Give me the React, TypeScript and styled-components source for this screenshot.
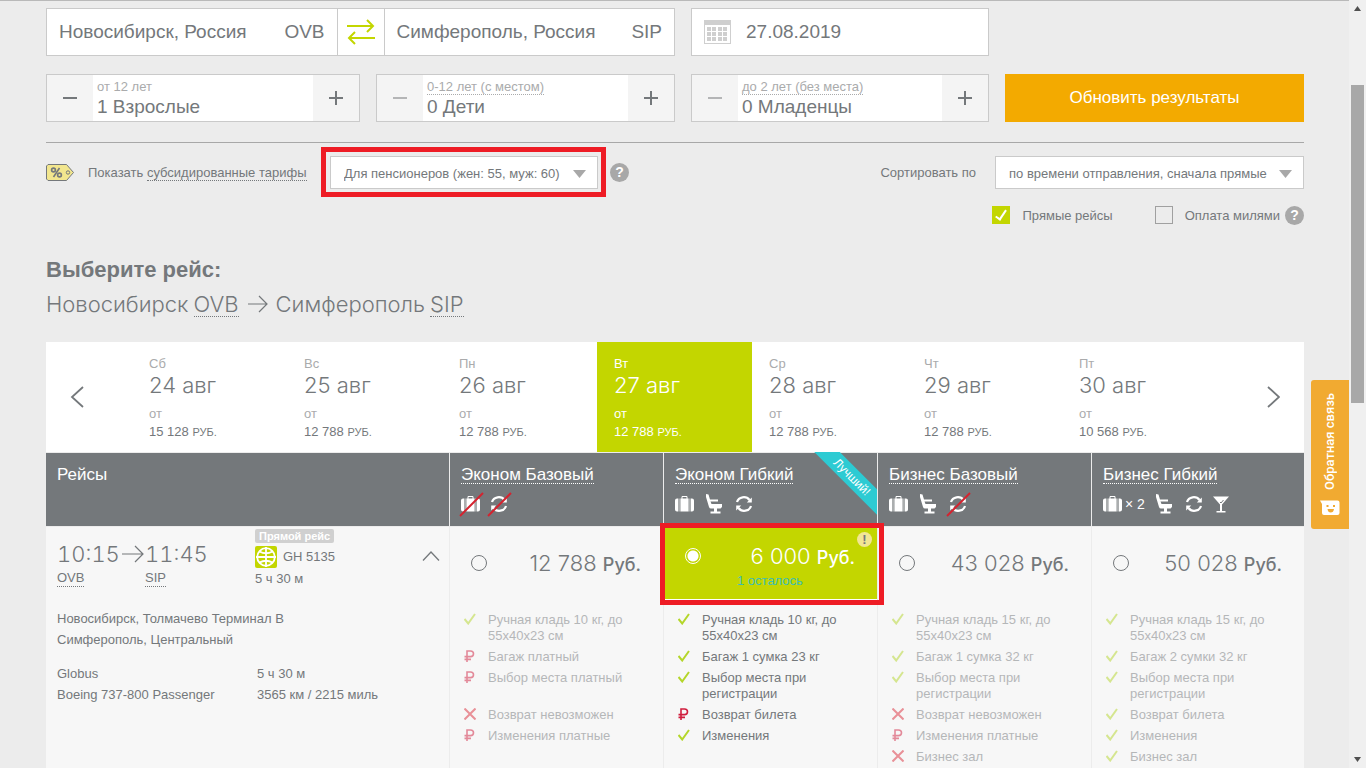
import React from "react";
import styled, { createGlobalStyle, css } from "styled-components";

const c = {
  page: "#ececec",
  text: "#74787b",
  muted: "#aaabac",
  line: "#cacaca",
  lime: "#c3d600",
  orange: "#f3aa00",
  red: "#ee1c25",
  cyan: "#2dcbd3",
};
const light = `"Inter", "Roboto", "Liberation Sans", sans-serif`;

const GlobalStyle = createGlobalStyle`
  *, *::before, *::after { box-sizing: border-box; }
  body { margin: 0; background: ${c.page}; }
  body, button, input, select {
    font-family: "Liberation Sans", Arial, sans-serif;
    font-size: 13px;
    color: ${c.text};
  }
  button { border: 0; padding: 0; background: none; cursor: pointer; }
  svg { display: block; flex: none; }
  h1, h2, p, ul { margin: 0; padding: 0; font-weight: 400; }
`;

const Shell = styled.div`
  display: flex;
  height: 100vh;
  overflow: hidden;
`;
const Main = styled.main`
  flex: 1;
  min-width: 0;
  padding: 7px 45px 0 46px;
  border-top: 1px solid #b9b9b9;
`;
const ScrollTrack = styled.div`
  display: flex;
  flex-direction: column;
  align-items: center;
  justify-content: space-between;
  width: 17px;
  padding: 6px 0;
  background: #f0f0f0;
`;
const ScrollThumb = styled.div`
  width: 13px;
  height: 318px;
  margin: 74px 0 auto;
  background: #a8a8a8;
`;

/* ---- search form ---- */
const SearchGrid = styled.form`
  display: grid;
  grid-template-columns: minmax(0, 314fr) minmax(0, 299fr) minmax(0, 298fr) minmax(0, 299fr);
  gap: 18px 16px;
  padding-bottom: 20px;
  border-bottom: 1px solid #a8a8a8;
`;
const Box = styled.div`
  display: flex;
  height: 48px;
  border: 1px solid ${c.line};
  background: #fff;
`;
const RouteBox = styled(Box)`
  grid-column: span 2;
`;
const Field = styled.label`
  display: flex;
  flex: 1;
  align-items: center;
  min-width: 0;
  padding: 0 12px;
  font-size: 19px;
`;
const TextInput = styled.input`
  flex: 1;
  min-width: 0;
  padding: 0;
  border: 0;
  outline: 0;
  background: none;
  font-size: 19px;
`;
const SwapButton = styled.button`
  display: flex;
  align-items: center;
  justify-content: center;
  width: 48px;
  border: solid ${c.line};
  border-width: 0 1px;
`;
const DateIcon = styled.span`
  margin-right: 15px;
`;
const StepButton = styled.button`
  display: flex;
  align-items: center;
  justify-content: center;
  width: 46px;
  background: #f4f4f4;
  color: ${c.text};
  &:disabled {
    color: #b4b5b6;
  }
`;
const StepBody = styled.div`
  flex: 1;
  min-width: 0;
  padding: 4px 4px 0;
`;
const StepHint = styled.span<{ $dotted?: boolean }>`
  display: table;
  line-height: 15px;
  color: ${c.muted};
  border-bottom: 1px ${(p) => (p.$dotted ? "dotted" : "solid")}
    ${(p) => (p.$dotted ? c.muted : "transparent")};
`;
const StepValue = styled.p`
  font-size: 19px;
  line-height: 23px;
`;
const SubmitButton = styled.button`
  grid-column: 4;
  height: 48px;
  background: ${c.orange};
  color: #fff;
  font-size: 17px;
`;

/* ---- filters ---- */
const FilterRow = styled.div`
  display: flex;
  align-items: center;
  margin-top: 13px;
`;
const FilterText = styled.span`
  margin-left: 14px;
`;
const Dotted = styled.a`
  display: inline-block;
  color: inherit;
  text-decoration: none;
  border-bottom: 1px dotted currentColor;
`;
const SelectWrap = styled.span<{ $marked?: boolean; $width: number }>`
  position: relative;
  display: block;
  width: ${(p) => p.$width}px;
  margin: ${(p) => (p.$marked ? "0 12px 0 auto" : "0 0 0 19px")};
  svg {
    position: absolute;
    right: 12px;
    top: 14px;
    pointer-events: none;
  }
  ${(p) =>
    p.$marked &&
    css`
      &::after {
        content: "";
        position: absolute;
        inset: -9px -8px -8px -9px;
        border: 5px solid ${c.red};
        pointer-events: none;
      }
    `}
`;
const Select = styled.select`
  display: block;
  width: 100%;
  height: 33px;
  padding: 2px 0 0 13px;
  border: 1px solid ${c.line};
  border-radius: 0;
  background: #fff;
  appearance: none;
`;
const Subsidy = styled.div`
  display: flex;
  align-items: center;
  width: 564px;
`;
const SortLabel = styled.label`
  margin-left: auto;
`;
const HelpButton = styled.button`
  width: 19px;
  height: 19px;
  border-radius: 50%;
  background: #a8a8a8;
  color: #fff;
  font-size: 14px;
  font-weight: 700;
  line-height: 19px;
`;
const CheckRow = styled.div`
  display: flex;
  justify-content: flex-end;
  align-items: center;
  height: 18px;
  margin-top: 17px;
`;
const CheckLabel = styled.label`
  display: flex;
  align-items: center;
  gap: 12px;
  margin-right: 42px;
  &:last-of-type {
    margin-right: 5px;
  }
`;
const Checkbox = styled.input`
  appearance: none;
  width: 18px;
  height: 18px;
  margin: 0;
  border: 1px solid #a0a0a0;
  &:checked {
    border: 0;
    background: ${c.lime};
  }
  &:checked::after {
    content: "";
    display: block;
    width: 6px;
    height: 12px;
    margin: 2px 0 0 6px;
    border: solid #fff;
    border-width: 0 2px 2px 0;
    transform: rotate(34deg);
  }
`;

/* ---- headings ---- */
const Title = styled.h1`
  margin-top: 32px;
  font-size: 22px;
  font-weight: 700;
  line-height: 28px;
`;
const RouteTitle = styled.h2`
  display: flex;
  align-items: center;
  height: 32px;
  margin: 4px 0 22px;
  font: 300 22px/24px ${light};
  svg {
    margin: 0 8px 0 9px;
  }
  a {
    margin-left: 5px;
  }
`;

/* ---- date carousel ---- */
const Carousel = styled.nav`
  display: grid;
  grid-template-columns: minmax(0, 86fr) repeat(7, minmax(0, 155fr)) minmax(0, 87fr);
  height: 110px;
  background: #fff;
`;
const CarouselArrow = styled.button`
  display: flex;
  align-items: center;
  padding: 0 24px;
  &:last-child {
    justify-content: flex-end;
  }
`;
const Day = styled.button<{ $active?: boolean }>`
  display: flex;
  flex-direction: column;
  align-items: flex-start;
  padding: 13px 0 0 17px;
  text-align: left;
  line-height: 18px;
  color: ${(p) => (p.$active ? "#fff" : c.text)};
  background: ${(p) => (p.$active ? c.lime : "none")};
`;
const DayMuted = styled.span<{ $active?: boolean }>`
  color: ${(p) => (p.$active ? "#fff" : c.muted)};
`;
const DayDate = styled.span`
  margin-bottom: 8px;
  font: 300 22px/24px ${light};
`;
const Small = styled.span`
  font-size: 11px;
`;

/* ---- fares table ---- */
const Table = styled.table`
  width: 100%;
  margin-top: 1px;
  border-spacing: 0;
  table-layout: fixed;
`;
const HeadCell = styled.th`
  position: relative;
  height: 73px;
  padding: 13px 11px 0;
  background: ${c.text};
  color: #fff;
  font-size: 17px;
  font-weight: 400;
  line-height: 17px;
  text-align: left;
  vertical-align: top;
  & + & {
    border-left: 1px solid ${c.page};
  }
`;
const IconRow = styled.div`
  display: flex;
  align-items: center;
  height: 22px;
  margin-top: 9px;
  font-size: 14px;
  gap: 8px;
`;
const BagCount = styled.span`
  display: flex;
  align-items: center;
  gap: 2px;
`;
const RibbonClip = styled.div`
  position: absolute;
  top: -1px;
  right: 0;
  width: 64px;
  height: 64px;
  overflow: hidden;
`;
const Ribbon = styled.span`
  position: absolute;
  top: 16px;
  left: -11px;
  width: 100px;
  background: ${c.cyan};
  font-size: 12px;
  line-height: 18px;
  text-align: center;
  transform: rotate(45deg);
`;
const BodyCell = styled.td`
  height: 320px;
  padding: 0;
  border-top: 1px solid ${c.page};
  background: #f7f7f7;
  vertical-align: top;
  & + & {
    border-left: 1px solid ${c.page};
  }
`;
const Flight = styled.div`
  display: grid;
  grid-template-columns: 88px 110px 1fr 27px;
  padding: 2px 0 0 11px;
  height: 81px;
`;
const FlightTime = styled.div`
  display: flex;
  flex-direction: column;
  align-items: flex-start;
  padding-top: 13px;
  line-height: 16px;
`;
const Clock = styled.span`
  display: flex;
  align-items: center;
  gap: 2px;
  margin-bottom: 4px;
  font: 300 22px/24px ${light};
  font-variant-numeric: tabular-nums;
`;
const FlightInfo = styled.div`
  display: flex;
  flex-direction: column;
  align-items: flex-start;
  line-height: 22px;
`;
const DirectBadge = styled.span`
  padding: 0 4px;
  border-radius: 2px;
  background: #d0d0d0;
  color: #fff;
  font-size: 11px;
  font-weight: 700;
  line-height: 14px;
`;
const FlightNumber = styled.span`
  display: flex;
  align-items: center;
  gap: 6px;
  margin-top: 3px;
`;
const CollapseButton = styled.button`
  align-self: start;
  padding-top: 22px;
`;
const Details = styled.div`
  display: grid;
  grid-template-columns: 200px 1fr;
  padding-left: 11px;
  line-height: 21px;
`;
const Airports = styled.div`
  grid-column: span 2;
  margin-bottom: 13px;
`;
const Fare = styled.label<{ $active?: boolean }>`
  position: relative;
  display: flex;
  flex-wrap: wrap;
  align-items: center;
  align-content: center;
  justify-content: space-between;
  height: 73px;
  padding: ${(p) => (p.$active ? 4 : 0)}px 22px 0 21px;
  border-bottom: 1px solid ${(p) => (p.$active ? "#fff" : "transparent")};
  background: ${(p) => (p.$active ? c.lime : "none")};
  color: ${(p) => (p.$active ? "#fff" : c.text)};
  ${(p) =>
    p.$active &&
    css`
      &::after {
        content: "";
        position: absolute;
        inset: -4px -7px -6px -4px;
        border: 5px solid ${c.red};
        pointer-events: none;
      }
    `}
`;
const Radio = styled.input`
  appearance: none;
  width: 16px;
  height: 16px;
  margin: 0;
  border: 1px solid currentColor;
  border-radius: 50%;
  color: inherit;
  &:checked {
    background: radial-gradient(circle, #fff 5px, transparent 6px);
  }
`;
const Price = styled.span`
  padding-top: 2px;
  font: 300 22px/28px ${light};
`;
const Currency = styled.span`
  font-size: 18px;
  font-weight: 500;
`;
const SeatsLeft = styled.span`
  flex-basis: 100%;
  padding-left: 52px;
  line-height: 18px;
  color: #3dbdb4;
`;
const Notice = styled.span`
  position: absolute;
  top: 5px;
  right: 5px;
  width: 15px;
  height: 15px;
  border-radius: 50%;
  background: #f2e694;
  color: ${c.text};
  font-size: 13px;
  font-weight: 700;
  line-height: 15px;
  text-align: center;
`;
const Features = styled.ul<{ $faded?: boolean }>`
  display: flex;
  flex-direction: column;
  gap: 5px;
  padding: 12px 20px 0 14px;
  list-style: none;
  opacity: ${(p) => (p.$faded ? 0.5 : 1)};
`;
const Feature = styled.li<{ $tall?: boolean }>`
  display: flex;
  gap: 12px;
  min-height: ${(p) => (p.$tall ? 32 : 16)}px;
  line-height: 16px;
  svg {
    margin-top: 1px;
  }
`;

const FeedbackTab = styled.button`
  position: fixed;
  top: 380px;
  right: 17px;
  display: flex;
  flex-direction: column;
  align-items: center;
  justify-content: space-between;
  width: 38px;
  height: 149px;
  padding: 13px 0;
  border-radius: 3px 0 0 3px;
  background: #f1aa31;
  color: #fff;
`;
const FeedbackText = styled.span`
  font: 500 13px/16px "Roboto", sans-serif;
  writing-mode: vertical-rl;
  transform: rotate(180deg);
`;

/* ---- drawings ---- */
const stroke = { fill: "none", stroke: "currentColor" } as const;

const LongArrow = ({ size = 20 }: { size?: number }) => (
  <svg width={size} height="18" viewBox={`0 0 ${size} 18`} {...stroke} strokeWidth="1.2">
    <path d={`M0 9H${size - 1}M${size - 9} 1L${size - 1} 9L${size - 9} 17`} />
  </svg>
);
const Chevron = ({ dir }: { dir: "left" | "right" }) => (
  <svg width="14" height="22" viewBox="0 0 14 22" {...stroke} strokeWidth="1.8">
    <path d={dir === "left" ? "M13 1L2 11L13 21" : "M2 1L13 11L2 21"} />
  </svg>
);
const Caret = () => (
  <svg width="13" height="8" viewBox="0 0 13 8" fill="#a8a8a8">
    <path d="M0 0H13L6.500 8Z" />
  </svg>
);
const SwapIcon = () => (
  <svg width="28" height="26" viewBox="0 0 28 26" fill="none" stroke={c.lime} strokeWidth="2">
    <path d="M0 7H26M20 1L26 7L20 13M28 19H2M8 13L2 19L8 25" />
  </svg>
);
const CalendarIcon = () => (
  <svg width="27" height="24" viewBox="0 0 27 24">
    <rect x="0.500" y="0.500" width="26" height="23" fill="#fff" stroke="#cfcfcf" />
    <rect width="27" height="5" fill="#cfcfcf" />
    {[7, 12, 17].map((y) =>
      [3, 8, 14, 19].map((x) => (
        <rect key={`${x}-${y}`} x={x} y={y} width="4" height="4" fill="#cfcfcf" />
      ))
    )}
  </svg>
);
const Sign = ({ plus }: { plus?: boolean }) => (
  <svg width="14" height="14" viewBox="0 0 14 14" {...stroke} strokeWidth="2">
    <path d={plus ? "M0 7H14M7 0V14" : "M0 7H14"} />
  </svg>
);
const TagIcon = () => (
  <svg width="28" height="17" viewBox="0 0 28 17" fill="none" stroke={c.text}>
    <path d="M2 0.500H20.500L27.500 8.500L20.500 16.500H2L0.500 15V2Z" fill="#f2e68e" />
    <g strokeWidth="1.600">
      <circle cx="7.500" cy="6" r="1.900" />
      <circle cx="13.500" cy="11" r="1.900" />
      <path d="M13.500 4L7.500 13" />
    </g>
    <circle cx="22" cy="8.500" r="1.700" />
  </svg>
);
const Strike = () => <path d="M-1 22L22 -1" stroke="#d4232f" strokeWidth="2" />;

const BagIcon = ({ off }: { off?: boolean }) => (
  <svg width="20" height="20" viewBox="0 0 20 20" fill="#fff" overflow="visible">
    <path d="M7 5V2.500H12V5" fill="none" stroke="#fff" strokeWidth="1" />
    <path d="M2 4.500H3V17.500H2Q0 17.500 0 15.500V6.500Q0 4.500 2 4.500ZM5.500 4.500H13.500V17.500H5.500ZM16 4.500H17Q19 4.500 19 6.500V15.500Q19 17.500 17 17.500H16Z" />
    <path d="M3 4.500H5.500V17.500H3ZM13.500 4.500H16V17.500H13.500Z" opacity="0.400" />
    {off && <Strike />}
  </svg>
);
const SeatIcon = () => (
  <svg width="23" height="22" viewBox="0 0 23 22" fill="#fff">
    <path d="M3 1L5.500 1.500L7 6.500H15V8.500H7.500L8.500 11H19V14L17.500 15.500H8Q6.500 15.500 6 14L3 4Z" />
    <path d="M11 15H14V18.500H17.500V20.500H7.500V18.500H11Z" />
  </svg>
);
const RefundIcon = ({ off }: { off?: boolean }) => (
  <svg width="20" height="20" viewBox="0 0 20 20" fill="none" stroke="#fff" strokeWidth="2.200" overflow="visible">
    <path d="M3 8A7 6.500 0 0 1 15.500 6M17 12A7 6.500 0 0 1 4.500 14" />
    <path d="M17.800 3.500V8.500H12.800ZM2.200 16.500V11.500H7.200Z" fill="#fff" stroke="none" />
    {off && <Strike />}
  </svg>
);
const GlassIcon = () => (
  <svg width="18" height="20" viewBox="0 0 18 20">
    <path d="M1 2.500H17L10 10.500V17H13.500V18.500H4.500V17H8V10.500Z" fill="#fff" />
    <path d="M8 8L9 9L11.500 6" fill="none" stroke={c.text} />
  </svg>
);
const GlobeIcon = () => (
  <svg width="22" height="22" viewBox="0 0 22 22" fill="none" stroke="#fff" strokeWidth="1.800">
    <rect width="22" height="22" rx="2" fill={c.lime} stroke="none" />
    <circle cx="11" cy="11" r="8.800" />
    <path d="M1 11H21M11 1V21M4.500 5.500Q11 9 17.500 5.500M4.500 16.500Q11 13 17.500 16.500" />
  </svg>
);
const ChatIcon = () => (
  <svg width="20" height="16" viewBox="0 0 20 16">
    <path d="M0 0.500H17.500Q19.500 0.500 19.500 2.500V13Q19.500 15 17.500 15H4Q2 15 2 13V4Z" fill="#fff" />
    <path d="M6.500 6H8.500M13 6H15" stroke="#f1aa31" strokeWidth="1.800" />
    <path d="M7.500 9H14Q13.500 12.500 10.700 12.500Q8 12.500 7.500 9Z" fill="#f1aa31" />
  </svg>
);

type Mark = "yes" | "no" | "pay";
const MarkIcon = ({ mark }: { mark: Mark }) => (
  <svg width="12" height="12" viewBox="0 0 12 12" fill="none" strokeWidth="2">
    {mark === "yes" && <path d="M0.500 6L4.200 10.500L11 1" stroke="#b4d62a" />}
    {mark === "no" && <path d="M0.500 0.500L11.500 11.500M11.500 0.500L0.500 11.500" stroke="#dc2b3a" />}
    {mark === "pay" && (
      <path d="M3 12V1H6.500Q9.500 1 9.500 3.800Q9.500 6.600 6.500 6.600H0.500M0.500 9.400H7" stroke="#d01e3e" strokeWidth="1.600" />
    )}
  </svg>
);

/* ---- data ---- */
const passengers = [
  { hint: "от 12 лет", value: "1 Взрослые", dotted: false, empty: false },
  { hint: "0-12 лет (с местом)", value: "0 Дети", dotted: true, empty: true },
  { hint: "до 2 лет (без места)", value: "0 Младенцы", dotted: true, empty: true },
];
const days = [
  ["Сб", "24 авг", "15 128"],
  ["Вс", "25 авг", "12 788"],
  ["Пн", "26 авг", "12 788"],
  ["Вт", "27 авг", "12 788"],
  ["Ср", "28 авг", "12 788"],
  ["Чт", "29 авг", "12 788"],
  ["Пт", "30 авг", "10 568"],
];
const ACTIVE_DAY = 3;

interface FareData {
  name: string;
  price: string;
  width: number;
  best?: boolean;
  left?: string;
  icons: React.ReactNode;
  features: [Mark, string][];
}
const fares: FareData[] = [
  {
    name: "Эконом Базовый",
    price: "12 788",
    width: 214,
    icons: (<><BagIcon off /><RefundIcon off /></>),
    features: [
      ["yes", "Ручная кладь 10 кг, до 55x40x23 см"],
      ["pay", "Багаж платный"],
      ["pay", "Выбор места платный"],
      ["no", "Возврат невозможен"],
      ["pay", "Изменения платные"],
    ],
  },
  {
    name: "Эконом Гибкий",
    price: "6 000",
    width: 214,
    best: true,
    left: "1 осталось",
    icons: (<><BagIcon /><SeatIcon /><RefundIcon /></>),
    features: [
      ["yes", "Ручная кладь 10 кг, до 55x40x23 см"],
      ["yes", "Багаж 1 сумка 23 кг"],
      ["yes", "Выбор места при регистрации"],
      ["pay", "Возврат билета"],
      ["yes", "Изменения"],
    ],
  },
  {
    name: "Бизнес Базовый",
    price: "43 028",
    width: 214,
    icons: (<><BagIcon /><SeatIcon /><RefundIcon off /></>),
    features: [
      ["yes", "Ручная кладь 15 кг, до 55x40x23 см"],
      ["yes", "Багаж 1 сумка 32 кг"],
      ["yes", "Выбор места при регистрации"],
      ["no", "Возврат невозможен"],
      ["pay", "Изменения платные"],
      ["no", "Бизнес зал"],
    ],
  },
  {
    name: "Бизнес Гибкий",
    price: "50 028",
    width: 213,
    icons: (<><BagCount><BagIcon />× 2</BagCount><SeatIcon /><RefundIcon /><GlassIcon /></>),
    features: [
      ["yes", "Ручная кладь 15 кг, до 55x40x23 см"],
      ["yes", "Багаж 2 сумки 32 кг"],
      ["yes", "Выбор места при регистрации"],
      ["yes", "Возврат билета"],
      ["yes", "Изменения"],
      ["yes", "Бизнес зал"],
    ],
  },
];

export default function App() {
  return (
    <Shell>
      <GlobalStyle />
      <Main>
        <SearchGrid onSubmit={(e) => e.preventDefault()}>
          <RouteBox>
            <Field>
              <TextInput aria-label="Откуда" defaultValue="Новосибирск, Россия" />
              OVB
            </Field>
            <SwapButton type="button" aria-label="Поменять местами">
              <SwapIcon />
            </SwapButton>
            <Field>
              <TextInput aria-label="Куда" defaultValue="Симферополь, Россия" />
              SIP
            </Field>
          </RouteBox>
          <Box>
            <Field>
              <DateIcon><CalendarIcon /></DateIcon>
              <TextInput aria-label="Дата" defaultValue="27.08.2019" />
            </Field>
          </Box>
          <span />
          {passengers.map((p) => (
            <Box key={p.value}>
              <StepButton type="button" aria-label="Меньше" disabled={p.empty}><Sign /></StepButton>
              <StepBody>
                <StepHint $dotted={p.dotted}>{p.hint}</StepHint>
                <StepValue>{p.value}</StepValue>
              </StepBody>
              <StepButton type="button" aria-label="Больше"><Sign plus /></StepButton>
            </Box>
          ))}
          <SubmitButton>Обновить результаты</SubmitButton>
        </SearchGrid>

        <FilterRow>
          <Subsidy>
            <TagIcon />
            <FilterText>
              Показать <Dotted href="#subsidy">субсидированные тарифы</Dotted>
            </FilterText>
            <SelectWrap $marked $width={268}>
              <Select aria-label="Субсидированный тариф">
                <option>Для пенсионеров (жен: 55, муж: 60)</option>
              </Select>
              <Caret />
            </SelectWrap>
          </Subsidy>
          <HelpButton aria-label="Справка о тарифах">?</HelpButton>
          <SortLabel htmlFor="sort">Сортировать по</SortLabel>
          <SelectWrap $width={309}>
            <Select id="sort">
              <option>по времени отправления, сначала прямые</option>
            </Select>
            <Caret />
          </SelectWrap>
        </FilterRow>
        <CheckRow>
          <CheckLabel><Checkbox type="checkbox" defaultChecked />Прямые рейсы</CheckLabel>
          <CheckLabel><Checkbox type="checkbox" />Оплата милями</CheckLabel>
          <HelpButton aria-label="Справка о милях">?</HelpButton>
        </CheckRow>

        <Title>Выберите рейс:</Title>
        <RouteTitle>
          Новосибирск <Dotted href="#ovb">OVB</Dotted>
          <LongArrow />
          Симферополь <Dotted href="#sip">SIP</Dotted>
        </RouteTitle>

        <Carousel>
          <CarouselArrow aria-label="Раньше"><Chevron dir="left" /></CarouselArrow>
          {days.map(([week, date, price], i) => {
            const active = i === ACTIVE_DAY;
            return (
              <Day key={date} $active={active}>
                <DayMuted $active={active}>{week}</DayMuted>
                <DayDate>{date}</DayDate>
                <DayMuted $active={active}>от</DayMuted>
                <span>{price} <Small>РУБ.</Small></span>
              </Day>
            );
          })}
          <CarouselArrow aria-label="Позже"><Chevron dir="right" /></CarouselArrow>
        </Carousel>

        <Table>
          <colgroup>
            <col />
            {fares.map((f) => <col key={f.name} width={f.width} />)}
          </colgroup>
          <thead>
            <tr>
              <HeadCell scope="col">Рейсы</HeadCell>
              {fares.map((f) => (
                <HeadCell key={f.name} scope="col">
                  <Dotted href="#fare">{f.name}</Dotted>
                  <IconRow>{f.icons}</IconRow>
                  {f.best && <RibbonClip><Ribbon>Лучший!</Ribbon></RibbonClip>}
                </HeadCell>
              ))}
            </tr>
          </thead>
          <tbody>
            <tr>
              <BodyCell>
                <Flight>
                  <FlightTime>
                    <Clock>10:15<LongArrow size={22} /></Clock>
                    <Dotted href="#ovb">OVB</Dotted>
                  </FlightTime>
                  <FlightTime>
                    <Clock>11:45</Clock>
                    <Dotted href="#sip">SIP</Dotted>
                  </FlightTime>
                  <FlightInfo>
                    <DirectBadge>Прямой рейс</DirectBadge>
                    <FlightNumber><GlobeIcon />GH 5135</FlightNumber>
                    <span>5 ч 30 м</span>
                  </FlightInfo>
                  <CollapseButton aria-label="Свернуть">
                    <svg width="18" height="10" viewBox="0 0 18 10" {...stroke} strokeWidth="1.300">
                      <path d="M1 9.500L9 1L17 9.500" />
                    </svg>
                  </CollapseButton>
                </Flight>
                <Details>
                  <Airports>
                    <p>Новосибирск, Толмачево Терминал B</p>
                    <p>Симферополь, Центральный</p>
                  </Airports>
                  <span>Globus</span>
                  <span>5 ч 30 м</span>
                  <span>Boeing 737-800 Passenger</span>
                  <span>3565 км / 2215 миль</span>
                </Details>
              </BodyCell>
              {fares.map((f) => (
                <BodyCell key={f.name}>
                  <Fare $active={f.best}>
                    <Radio type="radio" name="fare" defaultChecked={f.best} aria-label={f.name} />
                    <Price>{f.price} <Currency>Руб.</Currency></Price>
                    {f.left && <SeatsLeft>{f.left}</SeatsLeft>}
                    {f.best && <Notice>!</Notice>}
                  </Fare>
                  <Features $faded={!f.best}>
                    {f.features.map(([mark, text], i) => (
                      <Feature key={text} $tall={i === 2}>
                        <MarkIcon mark={mark} />
                        <span>{text}</span>
                      </Feature>
                    ))}
                  </Features>
                </BodyCell>
              ))}
            </tr>
          </tbody>
        </Table>
      </Main>
      <ScrollTrack aria-hidden>
        <svg width="7" height="5" viewBox="0 0 7 5" fill="#505050"><path d="M0 5L3.500 0L7 5Z" /></svg>
        <ScrollThumb />
        <svg width="7" height="5" viewBox="0 0 7 5" fill="#505050"><path d="M0 0H7L3.500 5Z" /></svg>
      </ScrollTrack>
      <FeedbackTab>
        <FeedbackText>Обратная связь</FeedbackText>
        <ChatIcon />
      </FeedbackTab>
    </Shell>
  );
}
